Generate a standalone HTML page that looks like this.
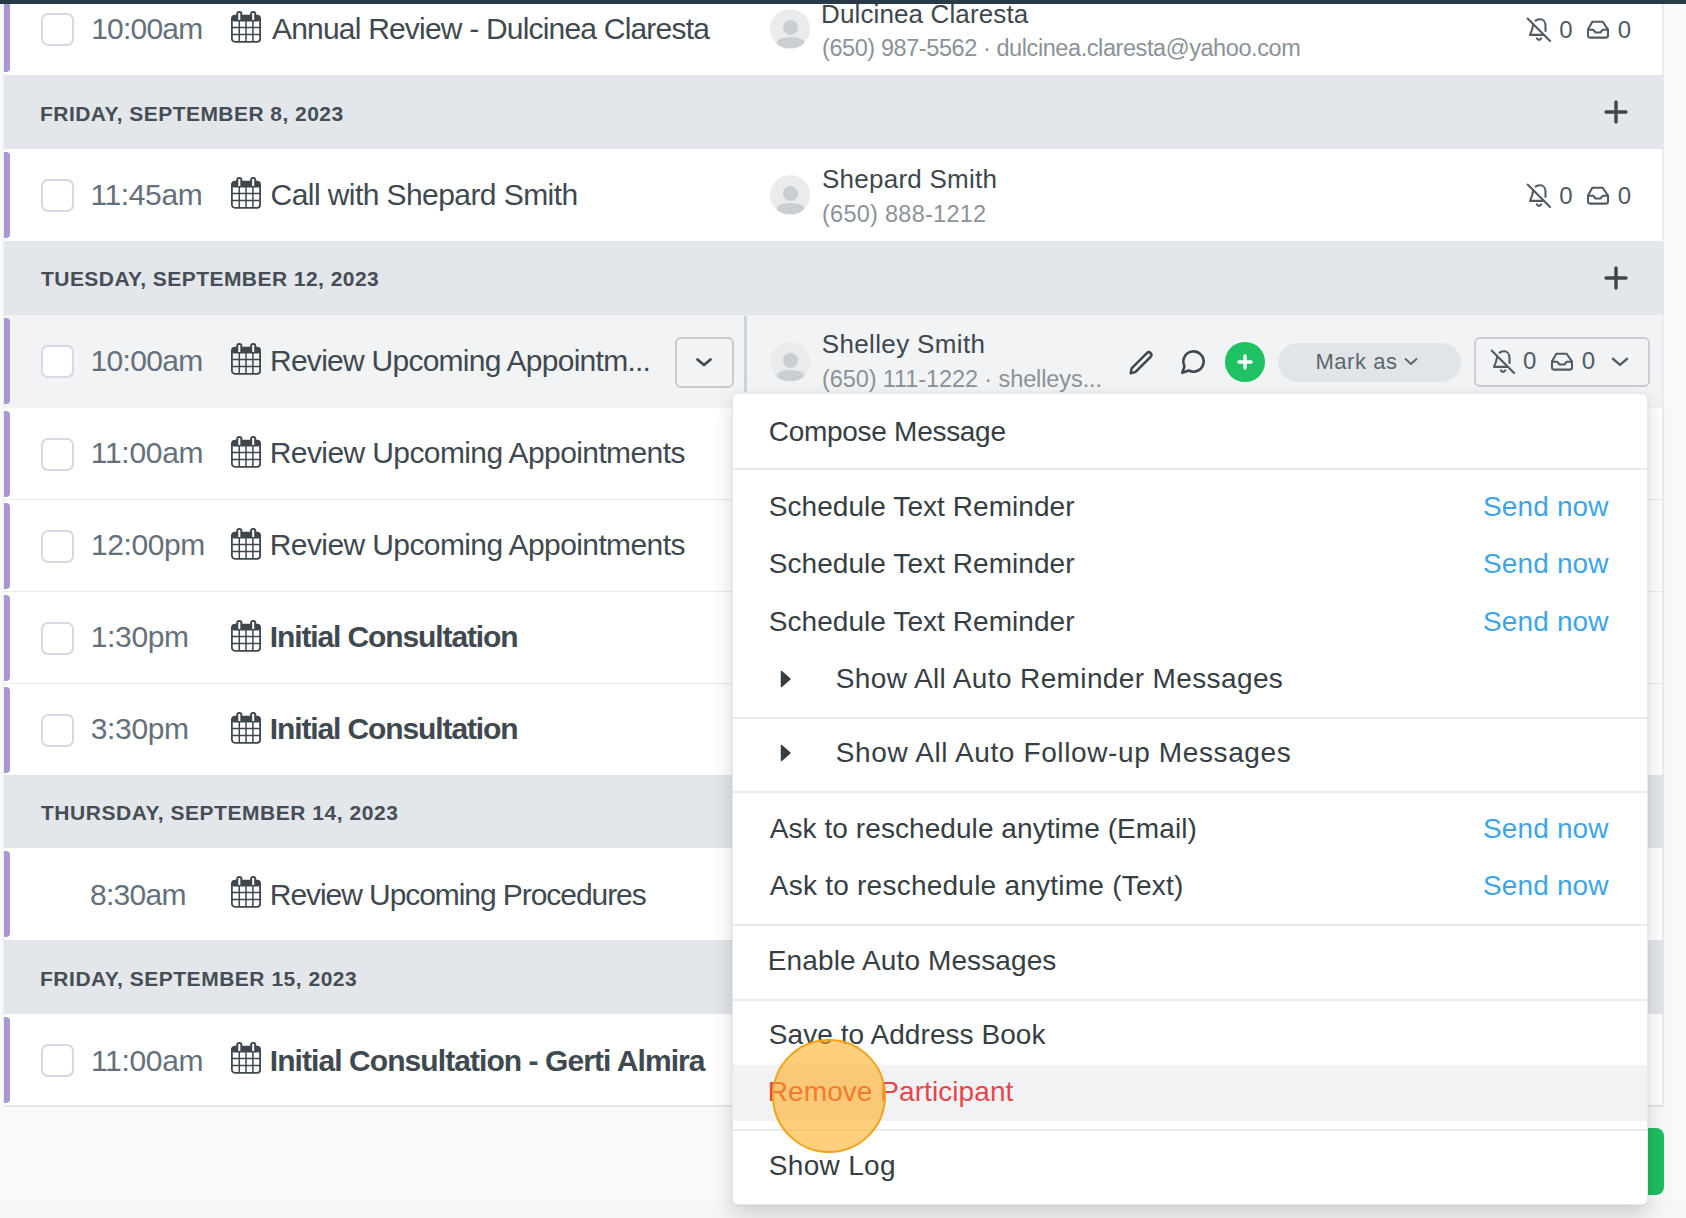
<!DOCTYPE html><html><head><meta charset="utf-8"><style>
html,body{margin:0;padding:0;}
body{width:1686px;height:1218px;overflow:hidden;position:relative;background:#f8f9fa;font-family:"Liberation Sans",sans-serif;}
.t{position:absolute;white-space:nowrap;line-height:1;}
.abs{position:absolute;}
.cal,.ic{position:absolute;}
.row{position:absolute;left:4px;width:1660px;background:#fff;box-sizing:border-box;border-right:2px solid #e9ebee;}
.hdr{position:absolute;left:4px;width:1660px;background:#e3e6ea;}
.bar{position:absolute;left:4px;width:6px;background:#a897d0;border-radius:0 4px 4px 0;}
.cb{position:absolute;left:40.5px;width:29.5px;height:29.5px;border:2px solid #d6d9e5;border-radius:7px;background:#fff;}
.av{position:absolute;width:40px;height:40px;border-radius:50%;background:#e9ebed;overflow:hidden;}
.avh{position:absolute;left:12.5px;top:10.5px;width:15px;height:15px;border-radius:50%;background:#c9ced2;}
.avb{position:absolute;left:6.5px;top:28px;width:27px;height:11px;border-radius:50%;background:#c9ced2;}
</style></head><body>
<div class="abs" style="left:0;top:0;width:1686px;height:4px;background:#283a46;z-index:5"></div>
<div class="abs" style="left:3px;top:0;width:1px;height:1107px;background:#eceef1"></div>
<div class="row" style="top:-17px;height:92px;background:#fff"></div>
<div class="bar" style="top:-14px;height:86px"></div>
<div class="cb" style="top:12.5px"></div>
<svg class="cal" style="left:231px;top:11.2px" width="30" height="32" viewBox="0 0 30 32">
<rect x="0.9" y="4.6" width="28.2" height="26.2" rx="3" fill="none" stroke="#3f474d" stroke-width="1.8"/>
<rect x="0.9" y="4.6" width="28.2" height="6" rx="2" fill="#3f474d"/>
<path d="M8.3 10v21M15 10v21M21.9 10v21M1 16.5h28M1 23.4h28" stroke="#3f474d" stroke-width="1.5"/>
<rect x="5.2" y="0" width="6.2" height="9" rx="3" fill="#3f474d"/><rect x="7.3" y="2" width="2" height="7" fill="#fff"/>
<rect x="19.1" y="0" width="6.2" height="9" rx="3" fill="#3f474d"/><rect x="21.2" y="2" width="2" height="7" fill="#fff"/>
</svg>
<div class="av" style="left:770px;top:9px"><div class="avh"></div><div class="avb"></div></div>
<svg class="ic" style="left:1524px;top:16px" width="30" height="28" viewBox="0 0 30 28" fill="none" stroke="#4f5a62" stroke-width="2.05" stroke-linecap="round" stroke-linejoin="round"><path d="M3.6 2.6L26.1 25"/><path d="M11.6 4.6C13 3.7 14.5 3.3 16.1 3.3C19.2 3.3 21.5 5.9 21.5 9.6V14.9"/><path d="M9.3 8.2Q8.2 14.5 6 18.85H19.4"/><path d="M12.9 22.4A2.3 2.3 0 0 0 17.2 22.4"/></svg>
<svg class="ic" style="left:1582px;top:16px" width="30" height="28" viewBox="0 0 30 28" fill="none" stroke="#4f5a62" stroke-width="2.05" stroke-linecap="round" stroke-linejoin="round"><path d="M6 13.6L10.3 5.75H20.7L26 13.6V19.6A2 2 0 0 1 24 21.6H8A2 2 0 0 1 6 19.6Z"/><path d="M6 13.8H11.2L13.6 16.5H18.4L20.6 13.8H26"/></svg>
<div class="hdr" style="top:75px;height:74px"></div>
<svg class="ic" style="left:1604px;top:100.0px" width="24" height="24" viewBox="0 0 24 24"><path d="M12 2v20M2 12h20" stroke="#3e474e" stroke-width="3.4" stroke-linecap="round"/></svg>
<div class="row" style="top:149px;height:92px;background:#fff"></div>
<div class="bar" style="top:152px;height:86px"></div>
<div class="cb" style="top:178.5px"></div>
<svg class="cal" style="left:231px;top:177.2px" width="30" height="32" viewBox="0 0 30 32">
<rect x="0.9" y="4.6" width="28.2" height="26.2" rx="3" fill="none" stroke="#3f474d" stroke-width="1.8"/>
<rect x="0.9" y="4.6" width="28.2" height="6" rx="2" fill="#3f474d"/>
<path d="M8.3 10v21M15 10v21M21.9 10v21M1 16.5h28M1 23.4h28" stroke="#3f474d" stroke-width="1.5"/>
<rect x="5.2" y="0" width="6.2" height="9" rx="3" fill="#3f474d"/><rect x="7.3" y="2" width="2" height="7" fill="#fff"/>
<rect x="19.1" y="0" width="6.2" height="9" rx="3" fill="#3f474d"/><rect x="21.2" y="2" width="2" height="7" fill="#fff"/>
</svg>
<div class="av" style="left:770px;top:175px"><div class="avh"></div><div class="avb"></div></div>
<svg class="ic" style="left:1524px;top:182px" width="30" height="28" viewBox="0 0 30 28" fill="none" stroke="#4f5a62" stroke-width="2.05" stroke-linecap="round" stroke-linejoin="round"><path d="M3.6 2.6L26.1 25"/><path d="M11.6 4.6C13 3.7 14.5 3.3 16.1 3.3C19.2 3.3 21.5 5.9 21.5 9.6V14.9"/><path d="M9.3 8.2Q8.2 14.5 6 18.85H19.4"/><path d="M12.9 22.4A2.3 2.3 0 0 0 17.2 22.4"/></svg>
<svg class="ic" style="left:1582px;top:182px" width="30" height="28" viewBox="0 0 30 28" fill="none" stroke="#4f5a62" stroke-width="2.05" stroke-linecap="round" stroke-linejoin="round"><path d="M6 13.6L10.3 5.75H20.7L26 13.6V19.6A2 2 0 0 1 24 21.6H8A2 2 0 0 1 6 19.6Z"/><path d="M6 13.8H11.2L13.6 16.5H18.4L20.6 13.8H26"/></svg>
<div class="hdr" style="top:241px;height:74px"></div>
<svg class="ic" style="left:1604px;top:266.0px" width="24" height="24" viewBox="0 0 24 24"><path d="M12 2v20M2 12h20" stroke="#3e474e" stroke-width="3.4" stroke-linecap="round"/></svg>
<div class="row" style="top:315px;height:93.5px;background:#f1f3f5"></div>
<div class="bar" style="top:318px;height:86px"></div>
<div class="cb" style="top:344.5px"></div>
<svg class="cal" style="left:231px;top:343.2px" width="30" height="32" viewBox="0 0 30 32">
<rect x="0.9" y="4.6" width="28.2" height="26.2" rx="3" fill="none" stroke="#3f474d" stroke-width="1.8"/>
<rect x="0.9" y="4.6" width="28.2" height="6" rx="2" fill="#3f474d"/>
<path d="M8.3 10v21M15 10v21M21.9 10v21M1 16.5h28M1 23.4h28" stroke="#3f474d" stroke-width="1.5"/>
<rect x="5.2" y="0" width="6.2" height="9" rx="3" fill="#3f474d"/><rect x="7.3" y="2" width="2" height="7" fill="#fff"/>
<rect x="19.1" y="0" width="6.2" height="9" rx="3" fill="#3f474d"/><rect x="21.2" y="2" width="2" height="7" fill="#fff"/>
</svg>
<div class="row" style="top:408px;height:92px;background:#fff"></div>
<div class="abs" style="left:4px;top:498.5px;width:1660px;height:2px;background:#e9ebee"></div>
<div class="bar" style="top:411px;height:86px"></div>
<div class="cb" style="top:437.5px"></div>
<svg class="cal" style="left:231px;top:436.2px" width="30" height="32" viewBox="0 0 30 32">
<rect x="0.9" y="4.6" width="28.2" height="26.2" rx="3" fill="none" stroke="#3f474d" stroke-width="1.8"/>
<rect x="0.9" y="4.6" width="28.2" height="6" rx="2" fill="#3f474d"/>
<path d="M8.3 10v21M15 10v21M21.9 10v21M1 16.5h28M1 23.4h28" stroke="#3f474d" stroke-width="1.5"/>
<rect x="5.2" y="0" width="6.2" height="9" rx="3" fill="#3f474d"/><rect x="7.3" y="2" width="2" height="7" fill="#fff"/>
<rect x="19.1" y="0" width="6.2" height="9" rx="3" fill="#3f474d"/><rect x="21.2" y="2" width="2" height="7" fill="#fff"/>
</svg>
<div class="row" style="top:500px;height:92px;background:#fff"></div>
<div class="abs" style="left:4px;top:590.5px;width:1660px;height:2px;background:#e9ebee"></div>
<div class="bar" style="top:503px;height:86px"></div>
<div class="cb" style="top:529.5px"></div>
<svg class="cal" style="left:231px;top:528.2px" width="30" height="32" viewBox="0 0 30 32">
<rect x="0.9" y="4.6" width="28.2" height="26.2" rx="3" fill="none" stroke="#3f474d" stroke-width="1.8"/>
<rect x="0.9" y="4.6" width="28.2" height="6" rx="2" fill="#3f474d"/>
<path d="M8.3 10v21M15 10v21M21.9 10v21M1 16.5h28M1 23.4h28" stroke="#3f474d" stroke-width="1.5"/>
<rect x="5.2" y="0" width="6.2" height="9" rx="3" fill="#3f474d"/><rect x="7.3" y="2" width="2" height="7" fill="#fff"/>
<rect x="19.1" y="0" width="6.2" height="9" rx="3" fill="#3f474d"/><rect x="21.2" y="2" width="2" height="7" fill="#fff"/>
</svg>
<div class="row" style="top:592px;height:92px;background:#fff"></div>
<div class="abs" style="left:4px;top:682.5px;width:1660px;height:2px;background:#e9ebee"></div>
<div class="bar" style="top:595px;height:86px"></div>
<div class="cb" style="top:621.5px"></div>
<svg class="cal" style="left:231px;top:620.2px" width="30" height="32" viewBox="0 0 30 32">
<rect x="0.9" y="4.6" width="28.2" height="26.2" rx="3" fill="none" stroke="#3f474d" stroke-width="1.8"/>
<rect x="0.9" y="4.6" width="28.2" height="6" rx="2" fill="#3f474d"/>
<path d="M8.3 10v21M15 10v21M21.9 10v21M1 16.5h28M1 23.4h28" stroke="#3f474d" stroke-width="1.5"/>
<rect x="5.2" y="0" width="6.2" height="9" rx="3" fill="#3f474d"/><rect x="7.3" y="2" width="2" height="7" fill="#fff"/>
<rect x="19.1" y="0" width="6.2" height="9" rx="3" fill="#3f474d"/><rect x="21.2" y="2" width="2" height="7" fill="#fff"/>
</svg>
<div class="row" style="top:684px;height:92px;background:#fff"></div>
<div class="bar" style="top:687px;height:86px"></div>
<div class="cb" style="top:713.5px"></div>
<svg class="cal" style="left:231px;top:712.2px" width="30" height="32" viewBox="0 0 30 32">
<rect x="0.9" y="4.6" width="28.2" height="26.2" rx="3" fill="none" stroke="#3f474d" stroke-width="1.8"/>
<rect x="0.9" y="4.6" width="28.2" height="6" rx="2" fill="#3f474d"/>
<path d="M8.3 10v21M15 10v21M21.9 10v21M1 16.5h28M1 23.4h28" stroke="#3f474d" stroke-width="1.5"/>
<rect x="5.2" y="0" width="6.2" height="9" rx="3" fill="#3f474d"/><rect x="7.3" y="2" width="2" height="7" fill="#fff"/>
<rect x="19.1" y="0" width="6.2" height="9" rx="3" fill="#3f474d"/><rect x="21.2" y="2" width="2" height="7" fill="#fff"/>
</svg>
<div class="hdr" style="top:775px;height:74px"></div>
<svg class="ic" style="left:1604px;top:800.0px" width="24" height="24" viewBox="0 0 24 24"><path d="M12 2v20M2 12h20" stroke="#3e474e" stroke-width="3.4" stroke-linecap="round"/></svg>
<div class="row" style="top:848px;height:92px;background:#fff"></div>
<div class="bar" style="top:851px;height:86px"></div>
<svg class="cal" style="left:231px;top:876.2px" width="30" height="32" viewBox="0 0 30 32">
<rect x="0.9" y="4.6" width="28.2" height="26.2" rx="3" fill="none" stroke="#3f474d" stroke-width="1.8"/>
<rect x="0.9" y="4.6" width="28.2" height="6" rx="2" fill="#3f474d"/>
<path d="M8.3 10v21M15 10v21M21.9 10v21M1 16.5h28M1 23.4h28" stroke="#3f474d" stroke-width="1.5"/>
<rect x="5.2" y="0" width="6.2" height="9" rx="3" fill="#3f474d"/><rect x="7.3" y="2" width="2" height="7" fill="#fff"/>
<rect x="19.1" y="0" width="6.2" height="9" rx="3" fill="#3f474d"/><rect x="21.2" y="2" width="2" height="7" fill="#fff"/>
</svg>
<div class="hdr" style="top:940px;height:74px"></div>
<svg class="ic" style="left:1604px;top:965.0px" width="24" height="24" viewBox="0 0 24 24"><path d="M12 2v20M2 12h20" stroke="#3e474e" stroke-width="3.4" stroke-linecap="round"/></svg>
<div class="row" style="top:1014px;height:92px;background:#fff"></div>
<div class="abs" style="left:4px;top:1105px;width:1660px;height:2px;background:#e4e6e9"></div>
<div class="bar" style="top:1017px;height:86px"></div>
<div class="cb" style="top:1043.5px"></div>
<svg class="cal" style="left:231px;top:1042.2px" width="30" height="32" viewBox="0 0 30 32">
<rect x="0.9" y="4.6" width="28.2" height="26.2" rx="3" fill="none" stroke="#3f474d" stroke-width="1.8"/>
<rect x="0.9" y="4.6" width="28.2" height="6" rx="2" fill="#3f474d"/>
<path d="M8.3 10v21M15 10v21M21.9 10v21M1 16.5h28M1 23.4h28" stroke="#3f474d" stroke-width="1.5"/>
<rect x="5.2" y="0" width="6.2" height="9" rx="3" fill="#3f474d"/><rect x="7.3" y="2" width="2" height="7" fill="#fff"/>
<rect x="19.1" y="0" width="6.2" height="9" rx="3" fill="#3f474d"/><rect x="21.2" y="2" width="2" height="7" fill="#fff"/>
</svg>
<div class="abs" style="left:674.5px;top:336.5px;width:55px;height:47px;border:2px solid #c7cbce;border-radius:6px;"></div>
<svg class="ic" style="left:694px;top:353.5px" width="20" height="14" viewBox="0 0 20 14"><path d="M3.5 5.5l6.5 5.5 6.5-5.5" fill="none" stroke="#3f4a52" stroke-width="2.8" stroke-linecap="round" stroke-linejoin="round"/></svg>
<div class="abs" style="left:744px;top:316px;width:3px;height:76px;background:#cbd3dc"></div>
<div class="av" style="left:770px;top:342px"><div class="avh"></div><div class="avb"></div></div>
<svg class="ic" style="left:1126.5px;top:347.5px" width="28" height="28" viewBox="0 0 28 28"><path d="M4.6 20.4L19.9 5.1a2.6 2.6 0 0 1 3.7 3.7L8.3 24.1 3.7 25.3z" fill="none" stroke="#3f474d" stroke-width="2.5" stroke-linejoin="round"/></svg>
<svg class="ic" style="left:1180.2px;top:347.8px" width="27" height="27" viewBox="0 0 24 24" fill="none" stroke="#3f474d" stroke-width="2.3" stroke-linecap="round" stroke-linejoin="round"><path d="M7.9 20A9 9 0 1 0 4 16.1L2 22Z"/></svg>
<div class="abs" style="left:1225.2px;top:342px;width:39.6px;height:39.6px;border-radius:50%;background:#20c162"></div>
<svg class="ic" style="left:1234.7px;top:351.5px" width="20" height="20" viewBox="0 0 20 20"><path d="M10 3.95v12.1M3.95 10h12.1" stroke="#fff" stroke-width="3.4" stroke-linecap="round"/></svg>
<div class="abs" style="left:1278px;top:343px;width:183px;height:39px;border-radius:20px;background:#e2e5e8"></div>
<svg class="ic" style="left:1403px;top:356px" width="16" height="12" viewBox="0 0 16 12"><path d="M2.5 3l5.5 5 5.5-5" fill="none" stroke="#5b6670" stroke-width="2" stroke-linecap="round" stroke-linejoin="round"/></svg>
<div class="abs" style="left:1473.5px;top:336.5px;width:172px;height:46.5px;border:2px solid #cacdd1;border-radius:6px;"></div>
<svg class="ic" style="left:1488px;top:348px" width="30" height="28" viewBox="0 0 30 28" fill="none" stroke="#4f5a62" stroke-width="2.05" stroke-linecap="round" stroke-linejoin="round"><path d="M3.6 2.6L26.1 25"/><path d="M11.6 4.6C13 3.7 14.5 3.3 16.1 3.3C19.2 3.3 21.5 5.9 21.5 9.6V14.9"/><path d="M9.3 8.2Q8.2 14.5 6 18.85H19.4"/><path d="M12.9 22.4A2.3 2.3 0 0 0 17.2 22.4"/></svg>
<svg class="ic" style="left:1546px;top:348px" width="30" height="28" viewBox="0 0 30 28" fill="none" stroke="#4f5a62" stroke-width="2.05" stroke-linecap="round" stroke-linejoin="round"><path d="M6 13.6L10.3 5.75H20.7L26 13.6V19.6A2 2 0 0 1 24 21.6H8A2 2 0 0 1 6 19.6Z"/><path d="M6 13.8H11.2L13.6 16.5H18.4L20.6 13.8H26"/></svg>
<svg class="ic" style="left:1609px;top:355px" width="22" height="14" viewBox="0 0 22 14"><path d="M4 3.8l7 6 7-6" fill="none" stroke="#505b63" stroke-width="2.4" stroke-linecap="round" stroke-linejoin="round"/></svg>
<div class="t" style="left:91.2px;top:13.60px;font-size:30px;color:#64707a;font-weight:400;letter-spacing:-0.799px;">10:00am</div>
<div class="t" style="left:272.0px;top:13.60px;font-size:30px;color:#3f4950;font-weight:400;letter-spacing:-0.803px;">Annual Review - Dulcinea Claresta</div>
<div class="t" style="left:90.4px;top:179.60px;font-size:30px;color:#64707a;font-weight:400;letter-spacing:-0.37px;">11:45am</div>
<div class="t" style="left:270.6px;top:179.60px;font-size:30px;color:#3f4950;font-weight:400;letter-spacing:-0.573px;">Call with Shepard Smith</div>
<div class="t" style="left:90.6px;top:345.61px;font-size:30px;color:#64707a;font-weight:400;letter-spacing:-0.7px;">10:00am</div>
<div class="t" style="left:270.0px;top:345.61px;font-size:30px;color:#3f4950;font-weight:400;letter-spacing:-0.741px;">Review Upcoming Appointm...</div>
<div class="t" style="left:90.8px;top:437.61px;font-size:30px;color:#64707a;font-weight:400;letter-spacing:-0.299px;">11:00am</div>
<div class="t" style="left:269.8px;top:437.61px;font-size:30px;color:#3f4950;font-weight:400;letter-spacing:-0.603px;">Review Upcoming Appointments</div>
<div class="t" style="left:91.0px;top:529.61px;font-size:30px;color:#64707a;font-weight:400;letter-spacing:-0.431px;">12:00pm</div>
<div class="t" style="left:269.8px;top:529.61px;font-size:30px;color:#3f4950;font-weight:400;letter-spacing:-0.603px;">Review Upcoming Appointments</div>
<div class="t" style="left:90.8px;top:621.61px;font-size:30px;color:#64707a;font-weight:400;letter-spacing:-0.36px;">1:30pm</div>
<div class="t" style="left:269.8px;top:621.61px;font-size:30px;color:#3f4950;font-weight:700;letter-spacing:-1.115px;">Initial Consultation</div>
<div class="t" style="left:90.8px;top:713.61px;font-size:30px;color:#64707a;font-weight:400;letter-spacing:-0.36px;">3:30pm</div>
<div class="t" style="left:269.8px;top:713.61px;font-size:30px;color:#3f4950;font-weight:700;letter-spacing:-1.115px;">Initial Consultation</div>
<div class="t" style="left:90.0px;top:879.61px;font-size:30px;color:#64707a;font-weight:400;letter-spacing:-0.72px;">8:30am</div>
<div class="t" style="left:269.8px;top:879.61px;font-size:30px;color:#3f4950;font-weight:400;letter-spacing:-1.064px;">Review Upcoming Procedures</div>
<div class="t" style="left:91.0px;top:1045.61px;font-size:30px;color:#64707a;font-weight:400;letter-spacing:-0.334px;">11:00am</div>
<div class="t" style="left:269.8px;top:1045.61px;font-size:30px;color:#3f4950;font-weight:700;letter-spacing:-0.929px;">Initial Consultation - Gerti Almira</div>
<div class="t" style="left:40.0px;top:102.82px;font-size:21px;color:#454e56;font-weight:700;letter-spacing:0.458px;">FRIDAY, SEPTEMBER 8, 2023</div>
<div class="t" style="left:41.0px;top:267.82px;font-size:21px;color:#454e56;font-weight:700;letter-spacing:0.45px;">TUESDAY, SEPTEMBER 12, 2023</div>
<div class="t" style="left:41.0px;top:801.72px;font-size:21px;color:#454e56;font-weight:700;letter-spacing:0.537px;">THURSDAY, SEPTEMBER 14, 2023</div>
<div class="t" style="left:40.0px;top:967.72px;font-size:21px;color:#454e56;font-weight:700;letter-spacing:0.516px;">FRIDAY, SEPTEMBER 15, 2023</div>
<div class="t" style="left:821.0px;top:1.49px;font-size:26px;color:#3e474e;font-weight:400;letter-spacing:0.125px;">Dulcinea Claresta</div>
<div class="t" style="left:822.0px;top:37.11px;font-size:23.5px;color:#8b9298;font-weight:400;letter-spacing:-0.419px;">(650) 987-5562 · dulcinea.claresta@yahoo.com</div>
<div class="t" style="left:822.0px;top:165.89px;font-size:26px;color:#3e474e;font-weight:400;letter-spacing:0.25px;">Shepard Smith</div>
<div class="t" style="left:822.0px;top:202.61px;font-size:23.5px;color:#8b9298;font-weight:400;letter-spacing:0.264px;">(650) 888-1212</div>
<div class="t" style="left:821.8px;top:331.49px;font-size:26px;color:#3e474e;font-weight:400;letter-spacing:0.35px;">Shelley Smith</div>
<div class="t" style="left:822.0px;top:367.51px;font-size:23.5px;color:#8b9298;font-weight:400;letter-spacing:-0.094px;">(650) 111-1222 · shelleys...</div>
<div class="t" style="left:1315.4px;top:350.68px;font-size:22px;color:#5b6670;font-weight:400;letter-spacing:0.57px;">Mark as</div>
<div class="t" style="left:1559.2px;top:18.48px;font-size:24px;color:#505b63;font-weight:400;letter-spacing:0px;">0</div>
<div class="t" style="left:1617.8px;top:18.48px;font-size:24px;color:#505b63;font-weight:400;letter-spacing:0px;">0</div>
<div class="t" style="left:1559.2px;top:184.18px;font-size:24px;color:#505b63;font-weight:400;letter-spacing:0px;">0</div>
<div class="t" style="left:1617.8px;top:184.18px;font-size:24px;color:#505b63;font-weight:400;letter-spacing:0px;">0</div>
<div class="t" style="left:1523.0px;top:349.18px;font-size:24px;color:#505b63;font-weight:400;letter-spacing:0px;">0</div>
<div class="t" style="left:1581.8px;top:349.18px;font-size:24px;color:#505b63;font-weight:400;letter-spacing:0px;">0</div>
<div class="abs" style="left:0;top:1200px;width:1686px;height:18px;background:#f5f6f8"></div>
<div class="abs" style="left:1600px;top:1128px;width:64px;height:67px;border-radius:0 8px 8px 0;background:#1fbf62"></div>
<div class="abs" style="left:732px;top:393px;width:916px;height:812px;background:#fff;border-radius:6px;box-sizing:border-box;border:1px solid #e6e8eb;box-shadow:0 10px 22px rgba(0,0,0,0.16),0 0 3px rgba(0,0,0,0.06);z-index:10;overflow:hidden">
<div class="abs" style="left:0;top:74px;width:916px;height:2px;background:#e8eaec"></div>
<svg class="ic" style="left:47px;top:276px" width="12" height="18" viewBox="0 0 12 18"><path d="M1.5 1.5L10 9 1.5 16.5z" fill="#363e44" stroke="#363e44" stroke-width="1.5" stroke-linejoin="round"/></svg>
<div class="abs" style="left:0;top:322.5px;width:916px;height:2px;background:#e8eaec"></div>
<svg class="ic" style="left:47px;top:350px" width="12" height="18" viewBox="0 0 12 18"><path d="M1.5 1.5L10 9 1.5 16.5z" fill="#363e44" stroke="#363e44" stroke-width="1.5" stroke-linejoin="round"/></svg>
<div class="abs" style="left:0;top:396.5px;width:916px;height:2px;background:#e8eaec"></div>
<div class="abs" style="left:0;top:530px;width:916px;height:2px;background:#e8eaec"></div>
<div class="abs" style="left:0;top:604.5px;width:916px;height:2px;background:#e8eaec"></div>
<div class="abs" style="left:0;top:671px;width:916px;height:56px;background:#f1f2f4"></div>
<div class="abs" style="left:0;top:735px;width:916px;height:2px;background:#e8eaec"></div>
<div class="t" style="left:35.799999999999955px;top:23.80px;font-size:28px;color:#363e44;font-weight:400;letter-spacing:-0.289px;">Compose Message</div>
<div class="t" style="left:35.799999999999955px;top:98.70px;font-size:28px;color:#363e44;font-weight:400;letter-spacing:0.056px;">Schedule Text Reminder</div>
<div class="t" style="left:750.0px;top:98.70px;font-size:28px;color:#3ca5e8;font-weight:400;letter-spacing:0.142px;">Send now</div>
<div class="t" style="left:35.799999999999955px;top:155.90px;font-size:28px;color:#363e44;font-weight:400;letter-spacing:0.056px;">Schedule Text Reminder</div>
<div class="t" style="left:750.0px;top:155.90px;font-size:28px;color:#3ca5e8;font-weight:400;letter-spacing:0.142px;">Send now</div>
<div class="t" style="left:35.799999999999955px;top:213.70px;font-size:28px;color:#363e44;font-weight:400;letter-spacing:0.056px;">Schedule Text Reminder</div>
<div class="t" style="left:750.0px;top:213.70px;font-size:28px;color:#3ca5e8;font-weight:400;letter-spacing:0.142px;">Send now</div>
<div class="t" style="left:102.79999999999995px;top:271.10px;font-size:28px;color:#363e44;font-weight:400;letter-spacing:0.375px;">Show All Auto Reminder Messages</div>
<div class="t" style="left:102.79999999999995px;top:345.00px;font-size:28px;color:#363e44;font-weight:400;letter-spacing:0.617px;">Show All Auto Follow-up Messages</div>
<div class="t" style="left:36.799999999999955px;top:420.70px;font-size:28px;color:#363e44;font-weight:400;letter-spacing:0.068px;">Ask to reschedule anytime (Email)</div>
<div class="t" style="left:750.0px;top:420.70px;font-size:28px;color:#3ca5e8;font-weight:400;letter-spacing:0.142px;">Send now</div>
<div class="t" style="left:36.799999999999955px;top:477.80px;font-size:28px;color:#363e44;font-weight:400;letter-spacing:0.238px;">Ask to reschedule anytime (Text)</div>
<div class="t" style="left:750.0px;top:477.80px;font-size:28px;color:#3ca5e8;font-weight:400;letter-spacing:0.142px;">Send now</div>
<div class="t" style="left:34.799999999999955px;top:552.70px;font-size:28px;color:#363e44;font-weight:400;letter-spacing:0.114px;">Enable Auto Messages</div>
<div class="t" style="left:35.799999999999955px;top:627.30px;font-size:28px;color:#363e44;font-weight:400;letter-spacing:0.063px;">Save to Address Book</div>
<div class="t" style="left:34.799999999999955px;top:684.00px;font-size:28px;color:#e6454c;font-weight:400;letter-spacing:0.071px;">Remove Participant</div>
<div class="t" style="left:35.799999999999955px;top:757.70px;font-size:28px;color:#363e44;font-weight:400;letter-spacing:0.314px;">Show Log</div>
</div>
<div class="abs" style="left:772px;top:1039px;width:110px;height:110px;border-radius:50%;background:rgba(255,168,18,0.55);border:2px solid #f0a41b;z-index:20"></div>
</body></html>
